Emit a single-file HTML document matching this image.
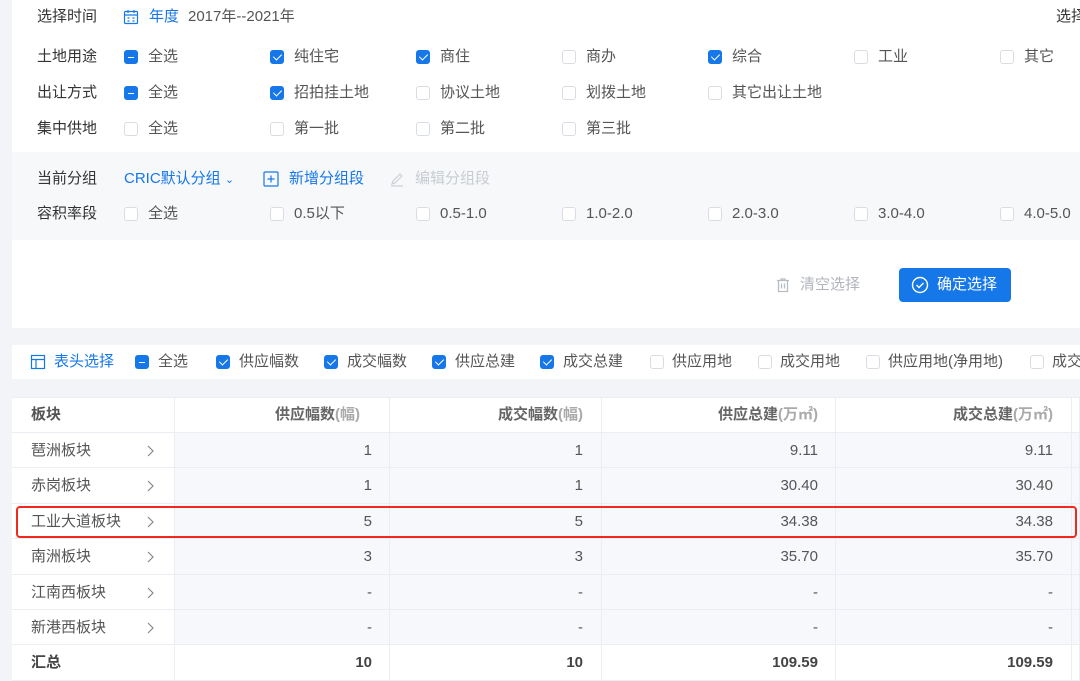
<!DOCTYPE html>
<html><head><meta charset="utf-8"><style>
*{margin:0;padding:0;box-sizing:border-box}
body{width:1080px;height:681px;overflow:hidden;background:#f2f4f7;font-family:"Liberation Sans","Noto Sans CJK SC",sans-serif;font-size:15px;color:#333;position:relative}
.a{position:absolute;white-space:nowrap;line-height:20px}
.lbl{color:#333}
.cb{position:absolute;width:14px;height:14px;border:1px solid #d9dde3;border-radius:3px;background:#fff}
.cb.on{background:#1677e8;border-color:#1677e8}
.cb.on::after{content:"";position:absolute;left:4px;top:1px;width:4px;height:7px;border:solid #fff;border-width:0 1.5px 1.5px 0;transform:rotate(45deg)}
.cb.ind{background:#1677e8;border-color:#1677e8}
.cb.ind::after{content:"";position:absolute;left:3px;top:5.5px;width:6px;height:1.5px;background:#fff}
.t{color:#555}
.blue{color:#1677e8}
.cell{position:absolute;border-right:1px solid #eaedf1;border-bottom:1px solid #eaedf1}
</style></head><body>
<div class="a" style="left:12px;top:0;width:1068px;height:152px;background:#fff"></div>
<div class="a" style="left:12px;top:152px;width:1068px;height:88px;background:#f7f8fa"></div>
<div class="a" style="left:12px;top:240px;width:1068px;height:88px;background:#fff"></div>
<div class="a" style="left:12px;top:345px;width:1068px;height:34px;background:#fff"></div>

<div class="a lbl" style="left:37px;top:7px">选择时间</div>
<svg class="a" style="left:123px;top:9px" width="16" height="16" viewBox="0 0 16 16" fill="none" stroke="#1677e8" stroke-width="1.2"><rect x="1.5" y="2.5" width="13" height="12" rx="1"/><path d="M1.5 6h13M5 1v3M11 1v3M4.5 9h2M9.5 9h2M4.5 12h2M9.5 12h2"/></svg>
<div class="a blue" style="left:149px;top:7px">年度</div>
<div class="a t" style="left:188px;top:7px">2017年--2021年</div>
<div class="a lbl" style="left:1056px;top:7px">选择</div>

<div class="a lbl" style="left:37px;top:47px">土地用途</div>
<div class="a lbl" style="left:37px;top:83px">出让方式</div>
<div class="a lbl" style="left:37px;top:119px">集中供地</div>

<div class="cb ind" style="left:124px;top:50px"></div><div class="a t" style="left:148px;top:47px">全选</div>
<div class="cb on" style="left:270px;top:50px"></div><div class="a t" style="left:294px;top:47px">纯住宅</div>
<div class="cb on" style="left:416px;top:50px"></div><div class="a t" style="left:440px;top:47px">商住</div>
<div class="cb" style="left:562px;top:50px"></div><div class="a t" style="left:586px;top:47px">商办</div>
<div class="cb on" style="left:708px;top:50px"></div><div class="a t" style="left:732px;top:47px">综合</div>
<div class="cb" style="left:854px;top:50px"></div><div class="a t" style="left:878px;top:47px">工业</div>
<div class="cb" style="left:1000px;top:50px"></div><div class="a t" style="left:1024px;top:47px">其它</div>

<div class="cb ind" style="left:124px;top:86px"></div><div class="a t" style="left:148px;top:83px">全选</div>
<div class="cb on" style="left:270px;top:86px"></div><div class="a t" style="left:294px;top:83px">招拍挂土地</div>
<div class="cb" style="left:416px;top:86px"></div><div class="a t" style="left:440px;top:83px">协议土地</div>
<div class="cb" style="left:562px;top:86px"></div><div class="a t" style="left:586px;top:83px">划拨土地</div>
<div class="cb" style="left:708px;top:86px"></div><div class="a t" style="left:732px;top:83px">其它出让土地</div>

<div class="cb" style="left:124px;top:122px"></div><div class="a t" style="left:148px;top:119px">全选</div>
<div class="cb" style="left:270px;top:122px"></div><div class="a t" style="left:294px;top:119px">第一批</div>
<div class="cb" style="left:416px;top:122px"></div><div class="a t" style="left:440px;top:119px">第二批</div>
<div class="cb" style="left:562px;top:122px"></div><div class="a t" style="left:586px;top:119px">第三批</div>

<div class="a lbl" style="left:37px;top:169px">当前分组</div>
<div class="a blue" style="left:124px;top:169px">CRIC默认分组 <span style="font-size:11px">&#8964;</span></div>
<svg class="a" style="left:263px;top:171px" width="16" height="16" viewBox="0 0 16 16" fill="none" stroke="#1677e8" stroke-width="1.2"><rect x="1" y="1" width="14" height="14" rx="1"/><path d="M8 4.5v7M4.5 8h7"/></svg>
<div class="a blue" style="left:289px;top:169px">新增分组段</div>
<svg class="a" style="left:389px;top:171px" width="16" height="16" viewBox="0 0 16 16" fill="none" stroke="#ccd0d6" stroke-width="1.2"><path d="M3 13l1-3 7-7 2 2-7 7zM2 15h12"/></svg>
<div class="a" style="left:415px;top:169px;color:#c8ccd2">编辑分组段</div>

<div class="a lbl" style="left:37px;top:204px">容积率段</div>
<div class="cb" style="left:124px;top:207px"></div><div class="a t" style="left:148px;top:204px">全选</div>
<div class="cb" style="left:270px;top:207px"></div><div class="a t" style="left:294px;top:204px">0.5以下</div>
<div class="cb" style="left:416px;top:207px"></div><div class="a t" style="left:440px;top:204px">0.5-1.0</div>
<div class="cb" style="left:562px;top:207px"></div><div class="a t" style="left:586px;top:204px">1.0-2.0</div>
<div class="cb" style="left:708px;top:207px"></div><div class="a t" style="left:732px;top:204px">2.0-3.0</div>
<div class="cb" style="left:854px;top:207px"></div><div class="a t" style="left:878px;top:204px">3.0-4.0</div>
<div class="cb" style="left:1000px;top:207px"></div><div class="a t" style="left:1024px;top:204px">4.0-5.0</div>

<svg class="a" style="left:775px;top:277px" width="16" height="16" viewBox="0 0 16 16" fill="none" stroke="#b8bdc5" stroke-width="1.3"><path d="M2 3.5h12M6 3.5V2h4v1.5M3.5 3.5v11h9v-11M6.5 6.5v5M9.5 6.5v5"/></svg>
<div class="a" style="left:800px;top:275px;color:#b0b5bd">清空选择</div>
<div class="a" style="left:899px;top:268px;width:112px;height:34px;background:#1677e8;border-radius:4px"></div>
<svg class="a" style="left:911px;top:276px" width="18" height="18" viewBox="0 0 18 18" fill="none" stroke="#fff" stroke-width="1.4"><circle cx="9" cy="9" r="7.5"/><path d="M5.5 9l2.5 2.5 4.5-4.5"/></svg>
<div class="a" style="left:937px;top:275px;color:#fff">确定选择</div>

<svg class="a" style="left:30px;top:354px" width="16" height="16" viewBox="0 0 16 16" fill="none" stroke="#1677e8" stroke-width="1.2"><rect x="1.5" y="1.5" width="13" height="13"/><path d="M1.5 5.5h13M6 5.5v9"/></svg>
<div class="a blue" style="left:54px;top:352px">表头选择</div>
<div class="cb ind" style="left:135px;top:355px"></div><div class="a t" style="left:158px;top:352px">全选</div>
<div class="cb on" style="left:216px;top:355px"></div><div class="a t" style="left:239px;top:352px">供应幅数</div>
<div class="cb on" style="left:324px;top:355px"></div><div class="a t" style="left:347px;top:352px">成交幅数</div>
<div class="cb on" style="left:432px;top:355px"></div><div class="a t" style="left:455px;top:352px">供应总建</div>
<div class="cb on" style="left:540px;top:355px"></div><div class="a t" style="left:563px;top:352px">成交总建</div>
<div class="cb" style="left:650px;top:355px"></div><div class="a t" style="left:672px;top:352px">供应用地</div>
<div class="cb" style="left:758px;top:355px"></div><div class="a t" style="left:780px;top:352px">成交用地</div>
<div class="cb" style="left:866px;top:355px"></div><div class="a t" style="left:888px;top:352px">供应用地(净用地)</div>
<div class="cb" style="left:1030px;top:355px"></div><div class="a t" style="left:1052px;top:352px">成交</div>

<div class="a" style="left:12px;top:397px;width:1068px;height:284px;background:#fff;border-top:1px solid #eaedf1"></div>
<div class="a" style="left:175px;top:433px;width:905px;height:212px;background:#f6f8fb"></div>
<div id="tbl"></div>
<div class="a" style="left:16px;top:506px;width:1061px;height:32px;border:2px solid #f0281e;border-radius:4px"></div>
<script>
var cols=[12,175,390,602,836,1072,1080];
var rows=[397,433,468,504,539,575,610,645,681];
var h='';
for(var r=0;r<8;r++){for(var c=0;c<6;c++){h+='<div class="cell" style="left:'+cols[c]+'px;top:'+rows[r]+'px;width:'+(cols[c+1]-cols[c])+'px;height:'+(rows[r+1]-rows[r])+'px"></div>';}}
var hd=['供应幅数<span style="color:#aaa">(幅)</span>','成交幅数<span style="color:#aaa">(幅)</span>','供应总建<span style="color:#aaa">(万㎡)</span>','成交总建<span style="color:#aaa">(万㎡)</span>'];
h+='<div class="a" style="left:31px;top:405px;font-weight:bold;color:#555">板块</div>';
var rt=[372,583,818,1053];
var hr=[360,583,818,1053];
for(var i=0;i<4;i++)h+='<div class="a" style="right:'+(1080-hr[i])+'px;top:405px;font-weight:bold;color:#666">'+hd[i]+'</div>';
var names=['琶洲板块','赤岗板块','工业大道板块','南洲板块','江南西板块','新港西板块'];
var d=[['1','1','9.11','9.11'],['1','1','30.40','30.40'],['5','5','34.38','34.38'],['3','3','35.70','35.70'],['-','-','-','-'],['-','-','-','-']];
for(var r=0;r<6;r++){var y=rows[r+1]+8;
h+='<div class="a t" style="left:31px;top:'+y+'px">'+names[r]+'</div>';
h+='<svg class="a" style="left:146px;top:'+(y+4)+'px" width="8" height="12" viewBox="0 0 8 12" fill="none" stroke="#888" stroke-width="1.2"><path d="M2 1l5 5-5 5"/></svg>';
for(var i=0;i<4;i++)h+='<div class="a t" style="right:'+(1080-rt[i])+'px;top:'+y+'px">'+d[r][i]+'</div>';}
var y=rows[7]+8;
h+='<div class="a" style="left:31px;top:'+y+'px;font-weight:bold;color:#444">汇总</div>';
var s=['10','10','109.59','109.59'];
for(var i=0;i<4;i++)h+='<div class="a" style="right:'+(1080-rt[i])+'px;top:'+y+'px;font-weight:bold;color:#444">'+s[i]+'</div>';
document.getElementById('tbl').innerHTML=h;
</script>
</body></html>
